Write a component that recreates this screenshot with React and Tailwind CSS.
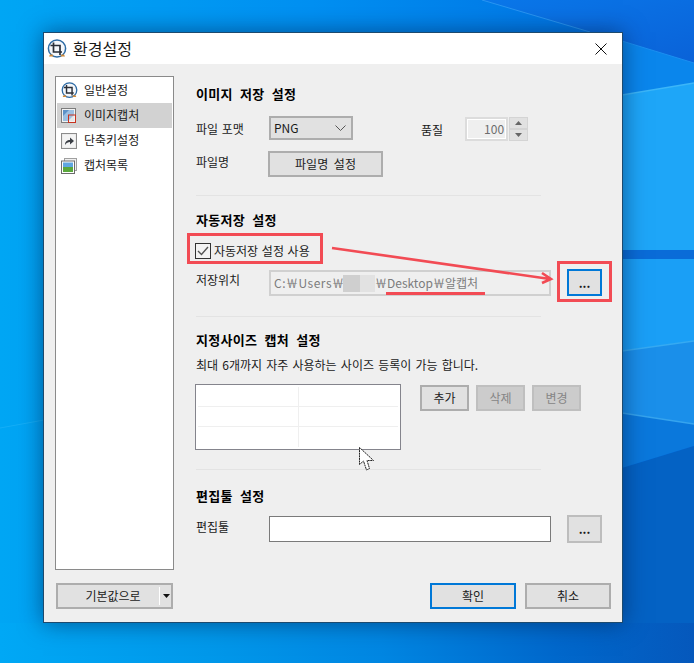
import React from 'react';

const btn = 'flex items-center justify-center border-2 border-[#adadad] bg-[#e1e1e1] text-[12px] text-[#1a1a1a]';
const btnOff = 'flex items-center justify-center border-2 border-[#bfbfbf] bg-[#cccccc] text-[12px] text-[#858585]';
const heading = 'h-[18px] text-[13px] leading-[18px] font-bold tracking-[0.3px] text-black [word-spacing:4px]';
const label = 'w-[73px] shrink-0 text-[12px] text-[#1a1a1a] [word-spacing:1px]';

function Wallpaper() {
  return (
    <svg className="absolute inset-0" width="694" height="663" viewBox="0 0 694 663">
      <defs>
        <linearGradient id="base" x1="0" y1="0" x2="1" y2="0">
          <stop offset="0" stopColor="#00a6f4" />
          <stop offset="0.45" stopColor="#0090f2" />
          <stop offset="0.8" stopColor="#0078e6" />
          <stop offset="1" stopColor="#0a6ce4" />
        </linearGradient>
        <linearGradient id="bottom" x1="0" y1="0" x2="1" y2="0">
          <stop offset="0" stopColor="#00a8f5" />
          <stop offset="0.3" stopColor="#0098ea" />
          <stop offset="0.55" stopColor="#0086e2" />
          <stop offset="0.8" stopColor="#0068cc" />
          <stop offset="1" stopColor="#0558bc" />
        </linearGradient>
        <linearGradient id="corner" x1="0" y1="0" x2="1" y2="1">
          <stop offset="0" stopColor="#0a78ea" />
          <stop offset="1" stopColor="#0a62d8" />
        </linearGradient>
      </defs>
      <rect width="694" height="663" fill="url(#base)" />
      <polygon points="482,0 694,0 694,63 590,32" fill="url(#corner)" />
      <polyline points="482,0 590,32" fill="none" stroke="#2a96f2" strokeWidth="1" />
      <polygon points="622,41 694,63 694,83 622,95" fill="#0a86ec" />
      <polyline points="622,41 694,63" fill="none" stroke="#1c8ff0" strokeWidth="1" />
      <polygon points="622,95 694,83 694,250 622,250" fill="#1ea6f8" />
      <polyline points="622,95 694,83" fill="none" stroke="#3cb6f8" strokeWidth="1.5" />
      <rect x="622" y="250" width="72" height="9" fill="#0a6cd8" />
      <polygon points="622,259 694,259 694,341 622,351" fill="#1a9ff6" />
      <polygon points="622,351 694,341 694,424 622,413" fill="#1a8fea" />
      <polyline points="622,351 694,341" fill="none" stroke="#36aaf2" strokeWidth="1.5" />
      <polygon points="622,413 694,424 694,446 622,468" fill="#0a78dc" />
      <polyline points="622,413 694,424" fill="none" stroke="#36a4ee" strokeWidth="1.5" />
      <polygon points="622,468 694,446 694,625 622,625" fill="#0462c4" />
      <polyline points="0,428 44,420" fill="none" stroke="#14aef6" strokeWidth="1" />
      <rect y="623" width="694" height="40" fill="url(#bottom)" />
    </svg>
  );
}

function CropIcon({ size = 17 }) {
  return (
    <svg width={size} height={size} viewBox="0 0 20 20" className="shrink-0">
      <circle cx="10" cy="9.5" r="8.6" fill="#f4f7fb" stroke="#2c6aa4" strokeWidth="1.5" />
      <path d="M6.5 3.5V13H15M3.5 6.5H13V16" fill="none" stroke="#2a2f38" strokeWidth="1.7" />
      <path d="M2 17.5h4.5l-1-2H3zM13.5 17.5H18l-1-2h-2.5z" fill="#d08a3a" />
    </svg>
  );
}

function CaptureIcon() {
  return (
    <svg width="16" height="16" viewBox="0 0 16 16" className="shrink-0">
      <rect x="0.5" y="0.5" width="14" height="14" fill="#f2f2f2" stroke="#7c7c7c" />
      <rect x="2" y="2" width="11" height="11" fill="#9cc0e2" />
      <polygon points="2,2 8,2 2,8" fill="#5d92c8" />
      <polygon points="13,7 13,13 7,13" fill="#e6e6e6" />
      <rect x="7.5" y="7" width="7" height="7.5" fill="none" stroke="#c8321e" strokeWidth="1" />
    </svg>
  );
}

function ShortcutIcon() {
  return (
    <svg width="16" height="16" viewBox="0 0 16 16" className="shrink-0">
      <rect x="0.5" y="0.5" width="15" height="15" fill="#e4e4e4" stroke="#8c8c8c" />
      <rect x="1.5" y="1.5" width="13" height="13" fill="#f4f4f4" />
      <path d="M4 12c0-3.5 2-5 5-5V4.5L13 8l-4 3.5V9c-2 0-3.5.8-5 3z" fill="#3b3f46" />
    </svg>
  );
}

function ListIcon() {
  return (
    <svg width="16" height="16" viewBox="0 0 16 16" className="shrink-0">
      <rect x="3.5" y="0.5" width="12" height="12" fill="#f0f0f0" stroke="#a0a0a0" />
      <rect x="0.5" y="3" width="13" height="12.5" fill="#fff" stroke="#6c6c6c" />
      <rect x="2" y="4.5" width="10" height="5" fill="#5fa6e0" />
      <rect x="2" y="9" width="10" height="5" fill="#5aa83c" />
    </svg>
  );
}

function NavItem({ icon, text, active }) {
  return (
    <div className={`flex h-[25px] items-center gap-[7px] pl-[4px] text-[12px] text-[#1a1a1a] ${active ? 'bg-[#d2d2d2]' : ''}`}>
      <span className="flex w-[16px] justify-center">{icon}</span>
      <span className="pb-[2px]">{text}</span>
    </div>
  );
}

function Divider() {
  return <div className="h-px w-[345px] bg-[#e3e3e3]" />;
}

function Cursor() {
  return (
    <svg className="absolute left-[315px] top-[414px]" width="16" height="25" viewBox="0 0 16 25">
      <path d="M0.5 0.5V17.5L4.5 14L7.5 23L10.5 21.5L8 13.5H14.5Z" fill="#fff" stroke="#222" strokeWidth="1" strokeDasharray="2 0.6" />
    </svg>
  );
}

export default function App() {
  return (
    <div className="relative h-[663px] w-[694px] overflow-hidden pl-[43px] pt-[32px] font-['Noto_Sans_CJK_KR','Noto_Sans',sans-serif]">
      <Wallpaper />
      <div className="relative h-[591px] w-[580px] border border-[#1d4a6e] bg-[#efefef] shadow-[0_0_22px_rgba(0,35,80,0.6)]">
        {/* Title bar */}
        <div className="flex h-[31px] items-center bg-white pl-[3px] pr-[15px]">
          <CropIcon size={20} />
          <span className="ml-[6px] pb-[2px] text-[16px] text-[#1a1a1a]">환경설정</span>
          <svg className="ml-auto" width="12" height="12" viewBox="0 0 12 12">
            <path d="M0.5 0.5L11.5 11.5M11.5 0.5L0.5 11.5" stroke="#111" strokeWidth="1" />
          </svg>
        </div>

        <div className="flex pl-[11px] pt-[12px]">
          {/* Sidebar */}
          <div className="h-[494px] w-[119px] shrink-0 border border-[#8a8a8a] bg-white p-px">
            <NavItem icon={<CropIcon />} text="일반설정" />
            <NavItem icon={<CaptureIcon />} text="이미지캡처" active />
            <NavItem icon={<ShortcutIcon />} text="단축키설정" />
            <NavItem icon={<ListIcon />} text="캡처목록" />
          </div>

          <div className="ml-[22px] flex w-[414px] flex-col pt-[9px]">
            <div className={heading}>이미지 저장 설정</div>
            <div className="mt-[13px] flex h-[25px] items-start">
              <div className={`${label} leading-[26px]`}>파일 포맷</div>
              <div className="flex h-[24px] w-[84px] items-center justify-between border-2 border-[#adadad] bg-[#e1e1e1] pl-[3px] pr-[5px] text-[12px] text-[#1a1a1a]">
                PNG
                <svg width="11" height="6" viewBox="0 0 11 6">
                  <path d="M0.5 0.5L5.5 5.5L10.5 0.5" fill="none" stroke="#555" />
                </svg>
              </div>
              <div className="ml-[68px] text-[12px] leading-[28px] text-[#1a1a1a]">품질</div>
              <div className="ml-[22px] mt-px flex h-[24px] w-[43px] items-center justify-end border-2 border-[#dcdcdc] pr-[2px] text-[12px] text-[#6d6d6d] outline outline-white -outline-offset-3">
                100
              </div>
              <div className="ml-px mt-px flex w-[19px] flex-col">
                <div className="flex h-[12px] items-center justify-center border border-[#d4d4d4] bg-[#e1e1e1]">
                  <svg width="7" height="4" viewBox="0 0 7 4"><path d="M0 4L3.5 0L7 4Z" fill="#666" /></svg>
                </div>
                <div className="flex h-[12px] items-center justify-center border border-[#d4d4d4] bg-[#e1e1e1]">
                  <svg width="7" height="4" viewBox="0 0 7 4"><path d="M0 0L3.5 4L7 0Z" fill="#666" /></svg>
                </div>
              </div>
            </div>
            <div className="mt-[10px] flex h-[26px] items-start">
              <div className="w-[72px] shrink-0 text-[12px] leading-[22px] text-[#1a1a1a]">파일명</div>
              <div className={`${btn} h-[26px] w-[115px] [word-spacing:3px]`}>파일명 설정</div>
            </div>
            <div className="mt-[18px]"><Divider /></div>

            <div className={`${heading} mt-[15px]`}>자동저장 설정</div>
            <div className="mt-[14px] flex h-[16px] items-center">
              <div className="-ml-px flex h-[16px] w-[16px] items-center justify-center border border-[#333] bg-[#f4f4f4]">
                <svg width="12" height="10" viewBox="0 0 12 10">
                  <path d="M1 5L4.5 8.5L11 1" fill="none" stroke="#555" strokeWidth="1.4" />
                </svg>
              </div>
              <span className="ml-[3px] text-[12px] text-[#1a1a1a] [word-spacing:1px]">자동저장 설정 사용</span>
            </div>
            <div className="mt-[10px] flex h-[27px] items-start">
              <div className={`${label} leading-[22px]`}>저장위치</div>
              <div className="mt-px flex h-[26px] w-[282px] items-center border-2 border-[#d0d0d0] pl-[3px] text-[12px] whitespace-nowrap text-[#7c7c7c]">
                <span className="w-[69px] tracking-[0.5px]">C:￦Users￦</span>
                <span className="h-[17px] w-[17px] bg-[#cfcfcf]" />
                <span className="h-[17px] w-[15px] bg-[#e2e2e2]" />
                <span>￦Desktop￦알캡처</span>
              </div>
              <div className="ml-[16px] flex h-[27px] w-[35px] items-center justify-center border-2 border-[#0078d7] bg-[#e1e1e1] text-[12px] font-bold text-[#1a1a1a]">...</div>
            </div>
            <div className="mt-[20px]"><Divider /></div>

            <div className={`${heading} mt-[14px]`}>지정사이즈 캡처 설정</div>
            <div className="mt-[8px] h-[16px] text-[12px] leading-[16px] text-[#1a1a1a] [word-spacing:1.5px]">최대 6개까지 자주 사용하는 사이즈 등록이 가능 합니다.</div>
            <div className="mt-[11px] flex h-[66px] items-start">
              <div className="-ml-px h-[66px] w-[206px] shrink-0 border border-[#84848c] bg-white p-[2px]">
                <div className="flex h-[20px] border-b border-[#efefef]">
                  <div className="w-[101px] border-r border-[#efefef]" />
                </div>
                <div className="flex h-[20px] border-b border-[#efefef]">
                  <div className="w-[101px] border-r border-[#efefef]" />
                </div>
                <div className="flex h-[20px]">
                  <div className="w-[101px] border-r border-[#efefef]" />
                </div>
              </div>
              <div className="ml-[19px] mt-px flex gap-[7px]">
                <div className={`${btn} h-[26px] w-[49px]`}>추가</div>
                <div className={`${btnOff} h-[26px] w-[49px]`}>삭제</div>
                <div className={`${btnOff} h-[26px] w-[49px]`}>변경</div>
              </div>
            </div>
            <div className="mt-[19px]"><Divider /></div>

            <div className={`${heading} mt-[17px]`}>편집툴 설정</div>
            <div className="mt-[10px] flex h-[28px] items-start">
              <div className={`${label} leading-[24px]`}>편집툴</div>
              <div className="mt-px h-[26px] w-[282px] border border-[#7a7a7a] bg-white" />
              <div className="ml-[16px] flex h-[28px] w-[35px] items-center justify-center border-2 border-[#bdbdbd] bg-[#e1e1e1] text-[12px] font-bold text-[#1a1a1a]">...</div>
            </div>
          </div>
        </div>

        {/* Footer buttons */}
        <div className="mt-[13px] flex items-start justify-between pl-[12px] pr-[11px]">
          <div className="flex h-[26px] w-[117px] items-center border-2 border-[#adadad] bg-[#e1e1e1] text-[12px] text-[#1a1a1a]">
            <span className="w-[101px] pl-[9px] text-center">기본값으로</span>
            <span className="h-[18px] w-px bg-white" />
            <svg className="ml-[3px]" width="7" height="4" viewBox="0 0 7 4"><path d="M0 0L3.5 4L7 0Z" fill="#111" /></svg>
          </div>
          <div className="flex gap-[9px]">
            <div className="flex h-[26px] w-[86px] items-center justify-center border-2 border-[#0078d7] bg-[#e1e1e1] text-[12px] text-[#1a1a1a]">확인</div>
            <div className={`${btn} h-[26px] w-[86px]`}>취소</div>
          </div>
        </div>

        {/* Red annotations on top of the dialog */}
        <div className="absolute left-[143px] top-[200px] h-[31px] w-[136px] border-[3px] border-[#f24b54]" />
        <div className="absolute left-[513px] top-[228px] h-[41px] w-[55px] border-[3px] border-[#f24b54]" />
        <div className="absolute left-[342px] top-[259px] h-[3px] w-[99px] bg-[#f24b54]" />
        <svg className="absolute left-[286px] top-[207px]" width="225" height="45" viewBox="0 0 225 45">
          <path d="M2 8L220 39M212 33L221 39L212 43" fill="none" stroke="#f24b54" strokeWidth="2.6" />
        </svg>
        <Cursor />
      </div>
    </div>
  );
}
